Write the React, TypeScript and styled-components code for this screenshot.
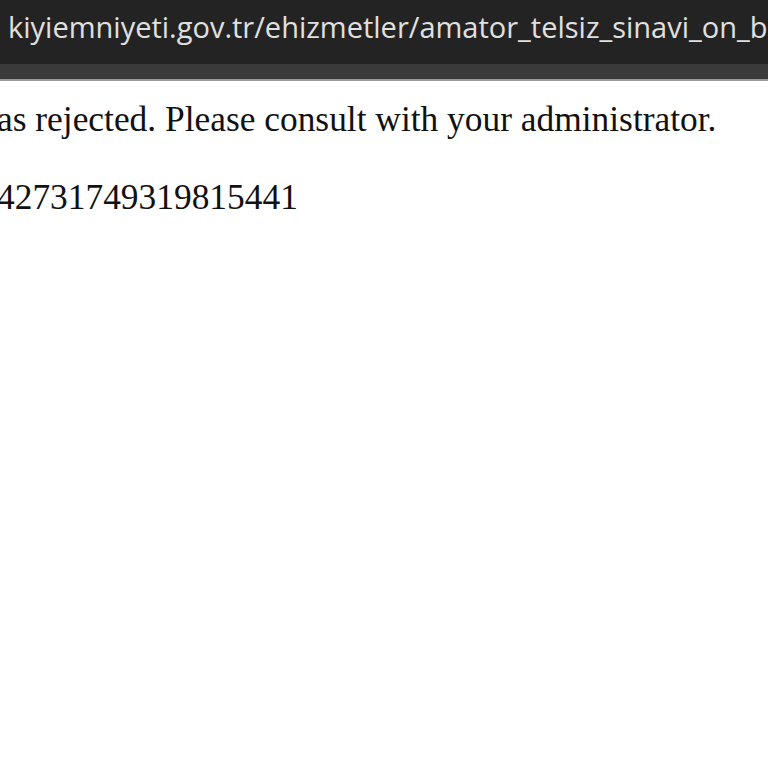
import styled, { createGlobalStyle } from "styled-components";

const GlobalStyle = createGlobalStyle`
  html, body {
    margin: 0;
    padding: 0;
    background: #ffffff;
    overflow: hidden;
  }
`;

const Screen = styled.div`
  width: 768px;
  height: 768px;
  overflow: hidden;
  background: #ffffff;
`;

const AddressBar = styled.div`
  height: 64px;
  box-sizing: border-box;
  background: #232323;
  padding: 12px 0 0 8px;
  overflow: hidden;
  white-space: nowrap;
`;

const UrlText = styled.span`
  display: block;
  font-family: "Open Sans", "Noto Sans", sans-serif;
  font-size: 29px;
  line-height: 29px;
  color: #e0e0e0;
`;

const ToolStrip = styled.div`
  height: 15px;
  background: #3a3a3a;
  border-bottom: 2px solid #9a9a9a;
`;

const Page = styled.div`
  padding-top: 19px;
  margin-left: -3px;
  font-family: "Liberation Serif", "Times New Roman", serif;
  font-size: 35.4px;
  line-height: 39px;
  color: #111111;
  white-space: nowrap;
`;

const Line = styled.div<{ $gap?: boolean }>`
  margin-bottom: ${(p) => (p.$gap ? "39px" : "0")};
`;

export default function App() {
  return (
    <Screen>
      <GlobalStyle />
      <AddressBar>
        <UrlText>kiyiemniyeti.gov.tr/ehizmetler/amator_telsiz_sinavi_on_basvuru</UrlText>
      </AddressBar>
      <ToolStrip />
      <Page>
        <Line $gap>as rejected. Please consult with your administrator.</Line>
        <Line>42731749319815441</Line>
      </Page>
    </Screen>
  );
}
